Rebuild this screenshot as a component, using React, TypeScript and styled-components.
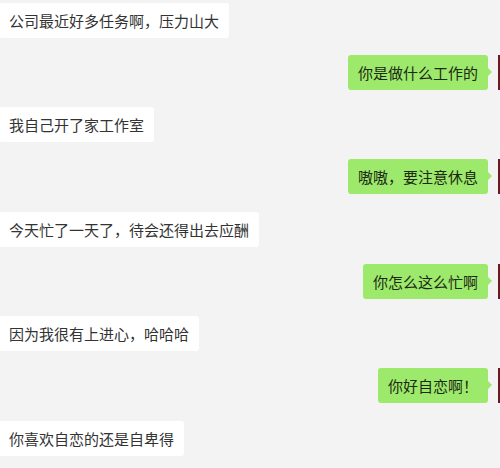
import styled, { createGlobalStyle } from "styled-components";

const GlobalStyle = createGlobalStyle`
  html, body {
    margin: 0;
    padding: 0;
    background: #f3f3f3;
    overflow: hidden;
  }
`;

const Page = styled.div`
  width: 500px;
  height: 468px;
  overflow: hidden;
  background: #f3f3f3;
  font-family: "Noto Sans CJK SC", "Noto Sans", sans-serif;
`;

const List = styled.div`
  display: flex;
  flex-direction: column;
  gap: 17.25px;
  margin: 0 -34px 0 -47px;
  padding-top: 2.5px;
`;

const Row = styled.div<{ $mine: boolean }>`
  display: flex;
  align-items: flex-start;
  gap: 10px;
  flex-direction: ${(p) => (p.$mine ? "row-reverse" : "row")};
`;

const Avatar = styled.div<{ $mine: boolean }>`
  width: 36px;
  height: 35px;
  flex-shrink: 0;
  background: ${(p) => (p.$mine ? "#6a1b20" : "#c9c9c9")};
`;

const Bubble = styled.div<{ $mine: boolean }>`
  position: relative;
  padding: 8px 10px;
  font-size: 15px;
  line-height: 19px;
  border-radius: 3px;
  white-space: nowrap;
  color: ${(p) => (p.$mine ? "#1c2a14" : "#333")};
  background: ${(p) => (p.$mine ? "#9de96b" : "#fff")};

  &::after {
    content: "";
    position: absolute;
    top: 13px;
    ${(p) => (p.$mine ? "right: -4px;" : "left: -4px;")}
    border-top: 4px solid transparent;
    border-bottom: 4px solid transparent;
    ${(p) =>
      p.$mine ? "border-left: 4px solid #9de96b;" : "border-right: 4px solid #fff;"}
  }
`;

const messages = [
  { mine: false, text: "公司最近好多任务啊，压力山大" },
  { mine: true, text: "你是做什么工作的" },
  { mine: false, text: "我自己开了家工作室" },
  { mine: true, text: "嗷嗷，要注意休息" },
  { mine: false, text: "今天忙了一天了，待会还得出去应酬" },
  { mine: true, text: "你怎么这么忙啊" },
  { mine: false, text: "因为我很有上进心，哈哈哈" },
  { mine: true, text: "你好自恋啊！" },
  { mine: false, text: "你喜欢自恋的还是自卑得" },
];

export default function App() {
  return (
    <Page>
      <GlobalStyle />
      <List>
        {messages.map((m, i) => (
          <Row key={i} $mine={m.mine}>
            <Avatar $mine={m.mine} />
            <Bubble $mine={m.mine}>{m.text}</Bubble>
          </Row>
        ))}
      </List>
    </Page>
  );
}
